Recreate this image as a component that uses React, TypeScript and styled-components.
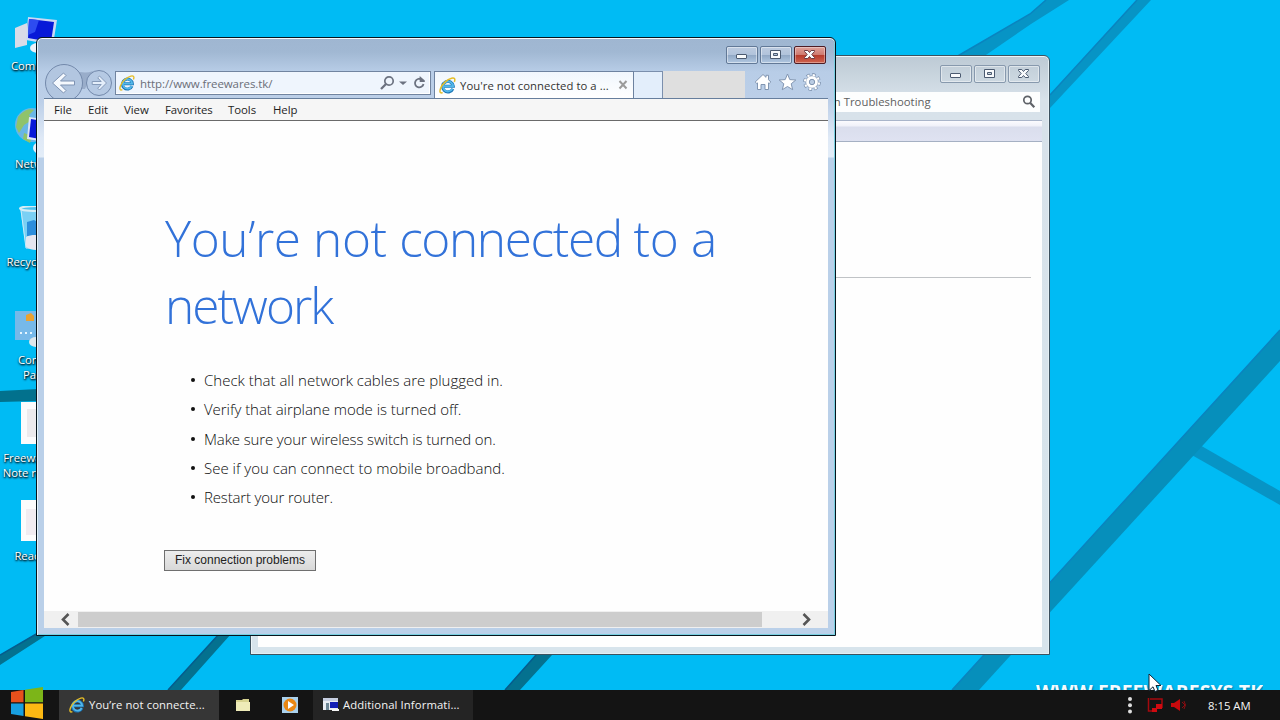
import React, {FunctionComponent, ReactNode} from 'react';
import styled, {createGlobalStyle, css} from 'styled-components';

const GlobalStyle = createGlobalStyle`
  body {
    margin: 0;
    font-family: "Open Sans", "Noto Sans", sans-serif;
    font-size: 11.3px;
  }
  * {
    box-sizing: border-box;
  }
`;

const Desktop = styled.div`
  position: relative;
  display: flex;
  flex-direction: column;
  width: 1280px;
  height: 720px;
  overflow: hidden;
  background: #00bbf4;
`;

const WallpaperSvg = styled.svg`
  position: absolute;
  top: 0;
  left: 0;
`;

const Watermark = styled.div`
  position: absolute;
  top: 679px;
  left: 1036px;
  height: 11px;
  overflow: hidden;
  color: #f2fbff;
  font-size: 19.5px;
  font-weight: 700;
  line-height: 26px;
  white-space: nowrap;
  text-shadow: 1px 1px 2px #0079a8;
`;

const IconColumn = styled.div`
  position: relative;
  display: flex;
  flex-direction: column;
  flex: 1;
  width: 75px;
  padding-top: 10px;
`;

const Shortcut = styled.div`
  display: flex;
  flex-direction: column;
  align-items: center;
  height: 98px;
  color: #fff;
  line-height: 15px;
  text-align: center;
  white-space: pre;
  text-shadow: 1px 1px 2px #000, 0 1px 2px #002a40;
  svg {
    flex: none;
    width: 48px;
    height: 48px;
  }
`;

interface WindowProps {
  $left: number;
  $top: number;
  $height: number;
  $active?: boolean;
}

const WindowFrame = styled.div<WindowProps>`
  position: absolute;
  display: flex;
  flex-direction: column;
  left: ${p => p.$left}px;
  top: ${p => p.$top}px;
  width: 800px;
  height: ${p => p.$height}px;
  padding: 0 7px 7px;
  border: 1px solid ${p => p.$active ? '#06141d' : '#3c5260'};
  border-radius: 6px 6px 0 0;
  ${p => p.$active ? css`
    background: linear-gradient(#9fb6d1 0, #a1b8d3 14px, #b8cde7 34px, #bccfe8 64px, #dfe9f6 100px, #e3edf8 119px, #bad0e9 120px);
    box-shadow: inset 0 1px #f4f9fd, inset 1px 0 #e4f3fa, inset -1px -1px #78cfe0;
  ` : css`
    background: linear-gradient(#bdcad5 0, #c9d5de 20px, #d8e2ea 44px, #d7e4ec 100%);
    box-shadow: inset 0 1px #edf5f8, inset 1px 0 #edf6fa, inset -1px -1px #e4eff4;
  `}
`;

const TitleBar = styled.div<{$inset: number}>`
  display: flex;
  flex: none;
  justify-content: flex-end;
  gap: 2px;
  height: 33px;
  padding: ${p => p.$inset}px 2px 0 0;
`;

const CaptionButton = styled.div<{$active?: boolean; $danger?: boolean}>`
  width: 32px;
  height: 18px;
  border: 1px solid ${p => p.$danger ? '#4e1c24' : p.$active ? '#627997' : '#8799ad'};
  border-radius: 2px;
  box-shadow: inset 0 0 0 1px rgba(255, 255, 255, ${p => p.$danger ? .35 : .45});
  ${p => p.$active && css`background: linear-gradient(#bccbe0 0, #b1c3db 50%, #91a8c5 51%, #b1c8e2 100%);`}
  ${p => p.$danger && css`background: linear-gradient(#dfa29b 0, #cf7a70 48%, #b5392b 50%, #cf6450 100%);`}
  svg {
    display: block;
    margin: -1px 0 0 -1px;
  }
`;

const NavRow = styled.div`
  display: flex;
  flex: none;
  height: 28px;
  border-bottom: 1px solid #667e9d;
`;

const NavButtons = styled.svg`
  flex: none;
  margin-top: -8px;
`;

const AddressBar = styled.div`
  display: flex;
  align-items: center;
  flex: none;
  width: 316px;
  height: 24px;
  padding: 0 3px;
  border: 1px solid #7184a0;
  background: #eff5fd;
  box-shadow: inset -1px -1px #fff;
  color: #6b6e78;
`;

const Url = styled.span`
  flex: 1;
  padding-left: 5px;
  font-size: 11.5px;
  letter-spacing: -.08px;
`;

const Tab = styled.div`
  display: flex;
  align-items: center;
  flex: none;
  width: 200px;
  margin-left: 3px;
  padding: 0 5px 0 4px;
  border: 1px solid #6d82a0;
  border-bottom: 0;
  background: linear-gradient(#f0f6fd, #fff);
  color: #333;
  span {
    flex: 1;
    padding-left: 4px;
    letter-spacing: .06px;
    white-space: nowrap;
  }
`;

const NewTab = styled.div`
  width: 29px;
  border: 1px solid #7b8fad;
  border-width: 1px 1px 0 0;
  background: #e3eefb;
`;

const TabSpace = styled.div`
  width: 82px;
  background: #dfdfdf;
`;

const CommandIcons = styled.div`
  display: flex;
  flex: 1;
  align-items: flex-start;
  gap: 6px;
  padding: 2px 0 0 9px;
`;

const MenuBar = styled.div`
  display: grid;
  grid-template-columns: 34px 36px 41px 63px 45px auto;
  flex: none;
  height: 22px;
  padding-left: 10px;
  border-bottom: 1px solid #6a6a6a;
  background: #f6f6f6;
  color: #1e1e1e;
  font-size: 11.4px;
  letter-spacing: -.05px;
  line-height: 22px;
`;

const Page = styled.div`
  flex: 1;
  min-height: 0;
  padding: 84px 0 0 121px;
  background: #fefefe;
`;

const Heading = styled.h1`
  width: 600px;
  margin: 0;
  color: #3272d9;
  font-size: 49.5px;
  font-weight: 300;
  line-height: 67px;
`;

const Word = styled.span<{$tracking: number}>`
  letter-spacing: ${p => p.$tracking}px;
`;

const Tips = styled.ul`
  margin: 26.3px 0 0;
  padding: 0 0 0 26px;
  list-style: none;
`;

const Tip = styled.li<{$tracking?: number}>`
  display: flex;
  align-items: center;
  height: 29.35px;
  color: #0c0c0c;
  font-size: 15px;
  font-weight: 300;
  letter-spacing: ${p => p.$tracking || 0}px;
  &::before {
    content: '';
    width: 4px;
    height: 4px;
    margin-right: 9px;
    border-radius: 50%;
    background: #111;
  }
`;

const FixButton = styled.button`
  display: block;
  width: 152px;
  height: 21px;
  margin: 38px 0 0 -1px;
  padding: 0;
  border: 1px solid #6f6f6f;
  background: linear-gradient(#ededed, #d8d8d8);
  color: #222;
  font: 12px/17px "Liberation Sans", sans-serif;
  white-space: nowrap;
`;

const ScrollBar = styled.div`
  display: flex;
  align-items: center;
  flex: none;
  height: 17px;
  padding-left: 15px;
  background: #f0f0f0;
`;

const Thumb = styled.div`
  width: 684px;
  height: 15px;
  margin: 0 38px 0 5px;
  background: #cdcdcd;
`;

const SearchRow = styled.div`
  display: flex;
  justify-content: flex-end;
  flex: none;
  height: 32px;
  padding: 3px 2px 0 0;
  border-bottom: 1px solid #a9b5ca;
`;

const SearchBox = styled.div`
  display: flex;
  align-items: center;
  justify-content: space-between;
  width: 268px;
  height: 20px;
  padding: 0 4px 1px 20px;
  background: #fdfefe;
  color: #606060;
  letter-spacing: .03px;
`;

const ToolStrip = styled.div`
  flex: none;
  height: 21px;
  border-bottom: 1px solid #a5b0c3;
  background: linear-gradient(#fbfbfe 0, #f0f1f9 5px, #dadeed 6px, #dfe2f1 100%);
`;

const InfoPage = styled.div`
  flex: 1;
  padding: 135px 11px 0 30px;
  background: #fefefe;
`;

const Rule = styled.div`
  height: 1px;
  background: #c0c3c6;
`;

const Taskbar = styled.div`
  position: relative;
  display: flex;
  align-items: stretch;
  height: 30px;
  background: #141414;
  color: #f4f4f4;
`;

const StartButton = styled.svg`
  flex: none;
  margin: -4px 15px 0 10px;
`;

const Task = styled.div<{$current?: boolean}>`
  display: flex;
  align-items: center;
  gap: 4px;
  width: 160px;
  padding: 0 0 1px 10px;
  background: ${p => p.$current ? '#363636' : '#242424'};
  letter-spacing: .1px;
  white-space: nowrap;
`;

const PinnedTask = styled.div<{$width: number}>`
  display: flex;
  align-items: center;
  justify-content: center;
  width: ${p => p.$width}px;
  padding-bottom: 1px;
`;

const Tray = styled.div`
  display: flex;
  align-items: center;
  margin-left: auto;
  padding-right: 29px;
`;

const TrayIcons = styled.div`
  display: grid;
  grid-template-columns: 20px 24px 16px;
  align-items: center;
`;

const Clock = styled.span`
  width: 43px;
  margin-left: 21px;
  white-space: nowrap;
`;

const Pointer = styled.svg`
  position: absolute;
  left: 1148px;
  top: 673px;
`;

const Wallpaper: FunctionComponent = () => (
  <WallpaperSvg width="1280" height="720">
    <g fill="#0794c5">
      <path d="M1046 0h23l-38 24-48 33h-27l74-43z"/>
      <path d="M1137 0h14l-101 108V95z"/>
      <path d="M1198 444l82 47v14l-90-51z"/>
    </g>
    <path d="M1280 330v31L979 690h-27z" fill="#068fbb"/>
    <path d="M1280 330L952 690M1137 0l-87 95M1046 0L1030 14 956 57" fill="none" stroke="#0a84bf" strokeWidth="1.500"/>
    <path d="M536 655h16l-32 35h-15zM219 634h12l-50 56h-13zM0 655l36-21h12L0 665z" fill="#04718f"/>
    <path d="M536 655l-31 35M219 634l-51 56M0 655l38-22" stroke="#065c8c" strokeWidth="1.500"/>
    <path d="M0 391l38-2v12l-38 1z" fill="#02718d"/>
  </WallpaperSvg>
);

const IeIcon: FunctionComponent<{size?: number}> = ({size = 16}) => (
  <svg width={size} height={size} viewBox="0 0 16 16" fill="none">
    <path d="M13 11.1A5 5 0 1 1 13.4 8.7H4.2" stroke="#1b75b5" strokeWidth="2.9"/>
    <path d="M12.7 11A4.7 4.7 0 1 1 13.2 8.7H4.4" stroke="#52b7ea" strokeWidth="1.8"/>
    <path d="M3.4 14.6C1 15.8.3 13.9 1.5 10.7 3 6.8 7.5 2.2 11.8 1.1c3-.8 3.7.9 2.6 3.5" stroke="#e5bd28" strokeWidth="1.4"/>
  </svg>
);

const captionGlyphs: Record<string, ReactNode> = {
  min: <rect x="10.500" y="8.500" width="10" height="4" rx=".5"/>,
  max: <path fillRule="evenodd" d="M10.500 4.500h10v8h-10zM13.500 7.500h4v2h-4z"/>,
  close: <path d="M10.500 4.500h3.300l1.700 2 1.700-2h3.300v1l-2.700 3 2.700 3v1h-3.300l-1.700-2-1.700 2h-3.300v-1l2.700-3-2.700-3z"/>
};

const CaptionButtons: FunctionComponent<{active?: boolean}> = ({active}) => (
  <>
    {['min', 'max', 'close'].map(kind => (
      <CaptionButton key={kind} $active={active} $danger={active && kind === 'close'}>
        <svg width="30" height="16" fill="#f8fafc"
             stroke={active && kind === 'close' ? '#6b3840' : '#4b5a70'}>{captionGlyphs[kind]}</svg>
      </CaptionButton>
    ))}
  </>
);

const shortcuts: { label: string, icon: ReactNode }[] = [
  {
    label: 'Computer',
    icon: <>
      <path d="M1 18l12-5v22L1 38z" fill="#d9dce8"/>
      <path d="M14 7l29 3-4 25-27-5z" fill="#cbd8f3"/>
      <path d="M15 9l25 3-3 20-23-4z" fill="#0719d8"/>
      <path d="M15 9l10 1-4 12-7 3z" fill="#2d4cf0"/>
      <ellipse cx="24" cy="38" rx="8" ry="5" fill="#eef1f8"/>
    </>
  },
  {
    label: 'Network',
    icon: <>
      <circle cx="18" cy="17" r="17" fill="#68b6e6"/>
      <path d="M4 9C10 2 15 0 20 2l-5 5 3 5-8 5-5 8-3-6zM10 25l8 3-2 7-7-4z" fill="#8fc36b"/>
      <path d="M15 9l28 4-4 22-26-4z" fill="#dbe4f8"/>
      <path d="M17 11l23 4-3 18-22-4z" fill="#0719d8"/>
      <ellipse cx="26" cy="40" rx="7" ry="6" fill="#e8eef8"/>
    </>
  },
  {
    label: 'Recycle Bin ',
    icon: <>
      <path d="M6 1h34l-5 42H12z" fill="#8fd3f3" opacity=".85"/>
      <path d="M13 16l7-2 11 7-2 10-16-1z" fill="#2c8edc"/>
      <path d="M12 31c6-3 14-2 21 0l-1 10c-6 4-14 4-20 0z" fill="#e4e6f0"/>
      <ellipse cx="23" cy="2.500" rx="17" ry="2.500" fill="#4ec2ee" stroke="#d5edf5" strokeWidth="2"/>
      <path d="M7 4l5 38" stroke="#c8ecfa"/>
    </>
  },
  {
    label: 'Control\nPanel',
    icon: <>
      <path d="M1 7h44v29H1z" fill="#76b9e9"/>
      <path d="M12 11l5-2 3 3v5h-8z" fill="#eba22f"/>
      <path d="M6 29h2m3 0h2m3 0h2" stroke="#e6f6ff" strokeWidth="2"/>
      <ellipse cx="22" cy="38" rx="7" ry="5" fill="#dde7eb"/>
    </>
  },
  {
    label: 'Freewaresys \nNote readme',
    icon: <><path d="M7 0h34v42H7z" fill="#fbfbfc"/><path d="M13 7h22v28H13z" fill="#eceaed"/></>
  },
  {
    label: 'Readme ',
    icon: <><path d="M7 0h34v41H7z" fill="#fcfcfc"/><path d="M12 9h22v26H12z" fill="#f1ecf1"/></>
  }
];

const heading: [string, number][] = [
  ['You’re not ', -.4],
  ['connected ', -1.35],
  ['to a ', -.3],
  ['network', -1.95]
];

const tips: { text: string, tracking?: number }[] = [
  {text: 'Check that all network cables are plugged in.'},
  {text: 'Verify that airplane mode is turned off.', tracking: -.04},
  {text: 'Make sure your wireless switch is turned on.', tracking: -.13},
  {text: 'See if you can connect to mobile broadband.'},
  {text: 'Restart your router.', tracking: -.17}
];

const HelpWindow: FunctionComponent = () => (
  <WindowFrame $left={250} $top={55} $height={600}>
    <TitleBar $inset={9}>
      <CaptionButtons/>
    </TitleBar>
    <SearchRow>
      <SearchBox>
        <span>Search in Troubleshooting</span>
        <svg width="14" height="14" fill="none" stroke="#5e6268">
          <circle cx="5.500" cy="5" r="3.700" strokeWidth="1.700"/>
          <path d="M8.300 8l4 4.300" strokeWidth="2.200"/>
        </svg>
      </SearchBox>
    </SearchRow>
    <ToolStrip/>
    <InfoPage>
      <Rule/>
    </InfoPage>
  </WindowFrame>
);

const BrowserWindow: FunctionComponent = () => (
  <WindowFrame $left={36} $top={37} $height={599} $active>
    <TitleBar $inset={8}>
      <CaptionButtons active/>
    </TitleBar>
    <NavRow>
      <NavButtons width="71" height="35" fill="none">
        <path d="M29 6q10 6 20 2l-8 18-7 0z" fill="#99adca"/>
        <circle cx="20" cy="20" r="18.500" fill="#b2c6e0" stroke="#7389ab"/>
        <circle cx="55" cy="20" r="12.500" fill="#b5c9e3" stroke="#7389ab"/>
        <path d="M8.500 20l11-10 2.500 2.500-5.500 5.500h14v4h-14l5.500 5.500-2.500 2.500z" fill="#f5f9fe" stroke="#7e93b3"/>
        <path d="M62.500 20l-7-7-1.800 1.800 3.500 3.700h-9v3h9l-3.500 3.700 1.800 1.800z" fill="#e4eefa" stroke="#869bb9"/>
      </NavButtons>
      <AddressBar>
        <IeIcon/>
        <Url>http://www.freewares.tk/</Url>
        <svg width="47" height="16" fill="none" stroke="#6c7280">
          <circle cx="9" cy="6" r="4.200" strokeWidth="1.700"/>
          <path d="M6 9l-5 5" strokeWidth="2.300"/>
          <path d="M19 6.500h8l-4 3.500z" fill="#6c7280" stroke="none"/>
          <path d="M41.500 4.400A4.300 4.300 0 1 0 43.500 9" strokeWidth="1.800"/>
          <path d="M39.700 1v6H44.800V5.500z" fill="#6c7280" stroke="none"/>
        </svg>
      </AddressBar>
      <Tab>
        <IeIcon size={17}/>
        <span>You're not connected to a ...</span>
        <svg width="10" height="10"><path d="M1.500 1l7 7.500m0-7.500l-7 7.500" stroke="#9b9b9b" strokeWidth="2"/></svg>
      </Tab>
      <NewTab/>
      <TabSpace/>
      <CommandIcons>
        <svg width="18" height="18" fill="#fff" stroke="#8195b1">
          <path d="M9 1.500l3 2.800v-2h2.500v4.400l2.300 2.300-1.600 1.500-.7-.6v6.600H11v-5H7v5H3.500V9.900l-.7.6L1.200 9z"/>
        </svg>
        <svg width="19" height="18" fill="#fff" stroke="#8195b1">
          <path d="M9.500 1l2.300 5.600 6 .4-4.600 3.800 1.500 5.900-5.200-3.200-5.200 3.200 1.500-5.900L1.200 7l6-.4z"/>
        </svg>
        <svg width="18" height="18" viewBox="0 0 18 18">
          <circle cx="9" cy="9" r="7.200" fill="none" stroke="#8195b1" strokeWidth="3.400" strokeDasharray="3.300 2.355"/>
          <circle cx="9" cy="9" r="6.300" fill="#fff" stroke="#8195b1" strokeWidth=".8"/>
          <circle cx="9" cy="9" r="7.100" fill="none" stroke="#fff" strokeWidth="2" strokeDasharray="2.300 3.277" strokeDashoffset="-.5"/>
          <circle cx="9" cy="9" r="2.700" fill="#b9cbe2" stroke="#8195b1"/>
        </svg>
      </CommandIcons>
    </NavRow>
    <MenuBar>
      {['File', 'Edit', 'View', 'Favorites', 'Tools', 'Help'].map(name => <span key={name}>{name}</span>)}
    </MenuBar>
    <Page>
      <Heading>
        {heading.map(([word, tracking]) => <Word key={word} $tracking={tracking}>{word}</Word>)}
      </Heading>
      <Tips>
        {tips.map(({text, tracking}) => <Tip key={text} $tracking={tracking}>{text}</Tip>)}
      </Tips>
      <FixButton>Fix connection problems</FixButton>
    </Page>
    <ScrollBar>
      <svg width="14" height="13"><path d="M9.500 1L4 6.500 9.500 12" fill="none" stroke="#555" strokeWidth="2.600"/></svg>
      <Thumb/>
      <svg width="14" height="13"><path d="M3.500 1L9 6.500 3.500 12" fill="none" stroke="#555" strokeWidth="2.600"/></svg>
    </ScrollBar>
  </WindowFrame>
);

const App: FunctionComponent = () => (
  <Desktop>
    <GlobalStyle/>
    <Wallpaper/>
    <Watermark>WWW.FREEWARESYS.TK</Watermark>
    <IconColumn>
      {shortcuts.map(({label, icon}) => (
        <Shortcut key={label}>
          <svg viewBox="0 0 48 48">{icon}</svg>
          {label}
        </Shortcut>
      ))}
    </IconColumn>
    <HelpWindow/>
    <BrowserWindow/>
    <Taskbar>
      <StartButton width="34" height="34">
        <path d="M1 6l12.500-2v12.300H1z" fill="#e8501c"/>
        <path d="M15 3.700L33 1v15.300H15z" fill="#7cb518"/>
        <path d="M1 17.500h12.500V30L1 28z" fill="#189fe0"/>
        <path d="M15 17.500h18V33l-18-2.800z" fill="#fdb913"/>
      </StartButton>
      <Task $current><IeIcon/>You’re not connecte...</Task>
      <PinnedTask $width={48}>
        <svg width="14" height="14">
          <path d="M0 2h6l1-1h6v3h1v9H0z" fill="#d8d491"/>
          <path d="M0 4h14v9H0z" fill="#eeebb8"/>
        </svg>
      </PinnedTask>
      <PinnedTask $width={46}>
        <svg width="16" height="16">
          <path d="M0 0h16v16H0z" fill="#a9d0ec"/>
          <circle cx="8" cy="8" r="6.500" fill="#e98713"/>
          <path d="M6 4l6 4-6 4z" fill="#fff"/>
        </svg>
      </PinnedTask>
      <Task>
        <svg width="16" height="13">
          <path d="M0 0h15v12H0z" fill="#e9edf4"/>
          <path d="M0 0h15v3H0z" fill="#c6cee0"/>
          <path d="M7 4h8v6H7z" fill="#1420b6"/>
          <path d="M3 5h3v7H3z" fill="#6d8796"/>
          <path d="M9 11h7v2H9z" fill="#f7f7f7"/>
        </svg>
        Additional Informati...
      </Task>
      <Tray>
        <TrayIcons>
          <svg width="6" height="18" fill="#ddd">
            <circle cx="3" cy="3" r="2"/>
            <circle cx="3" cy="9.300" r="2"/>
            <circle cx="3" cy="15.600" r="2"/>
          </svg>
          <svg width="16" height="16">
            <path d="M3 2h12v9M1.500 1v13h8" fill="none" stroke="#a5090e" strokeWidth="1.500"/>
            <path d="M9 7h6v5H9zM5 11h5v4H5z" fill="#d00a10"/>
          </svg>
          <svg width="16" height="14">
            <path d="M0 5h3l6-4v12L3 9H0z" fill="#c80a0d"/>
            <path d="M11 4l3 3-3 3m2-7q3 4 0 8" fill="none" stroke="#8c0c10"/>
          </svg>
        </TrayIcons>
        <Clock>8:15 AM</Clock>
      </Tray>
    </Taskbar>
    <Pointer width="16" height="21">
      <path d="M1 1v16.500l4-3.700L7 18.500l3-1.300-2-4.700h5z" fill="#fff" stroke="#123"/>
    </Pointer>
  </Desktop>
);

export default App;
